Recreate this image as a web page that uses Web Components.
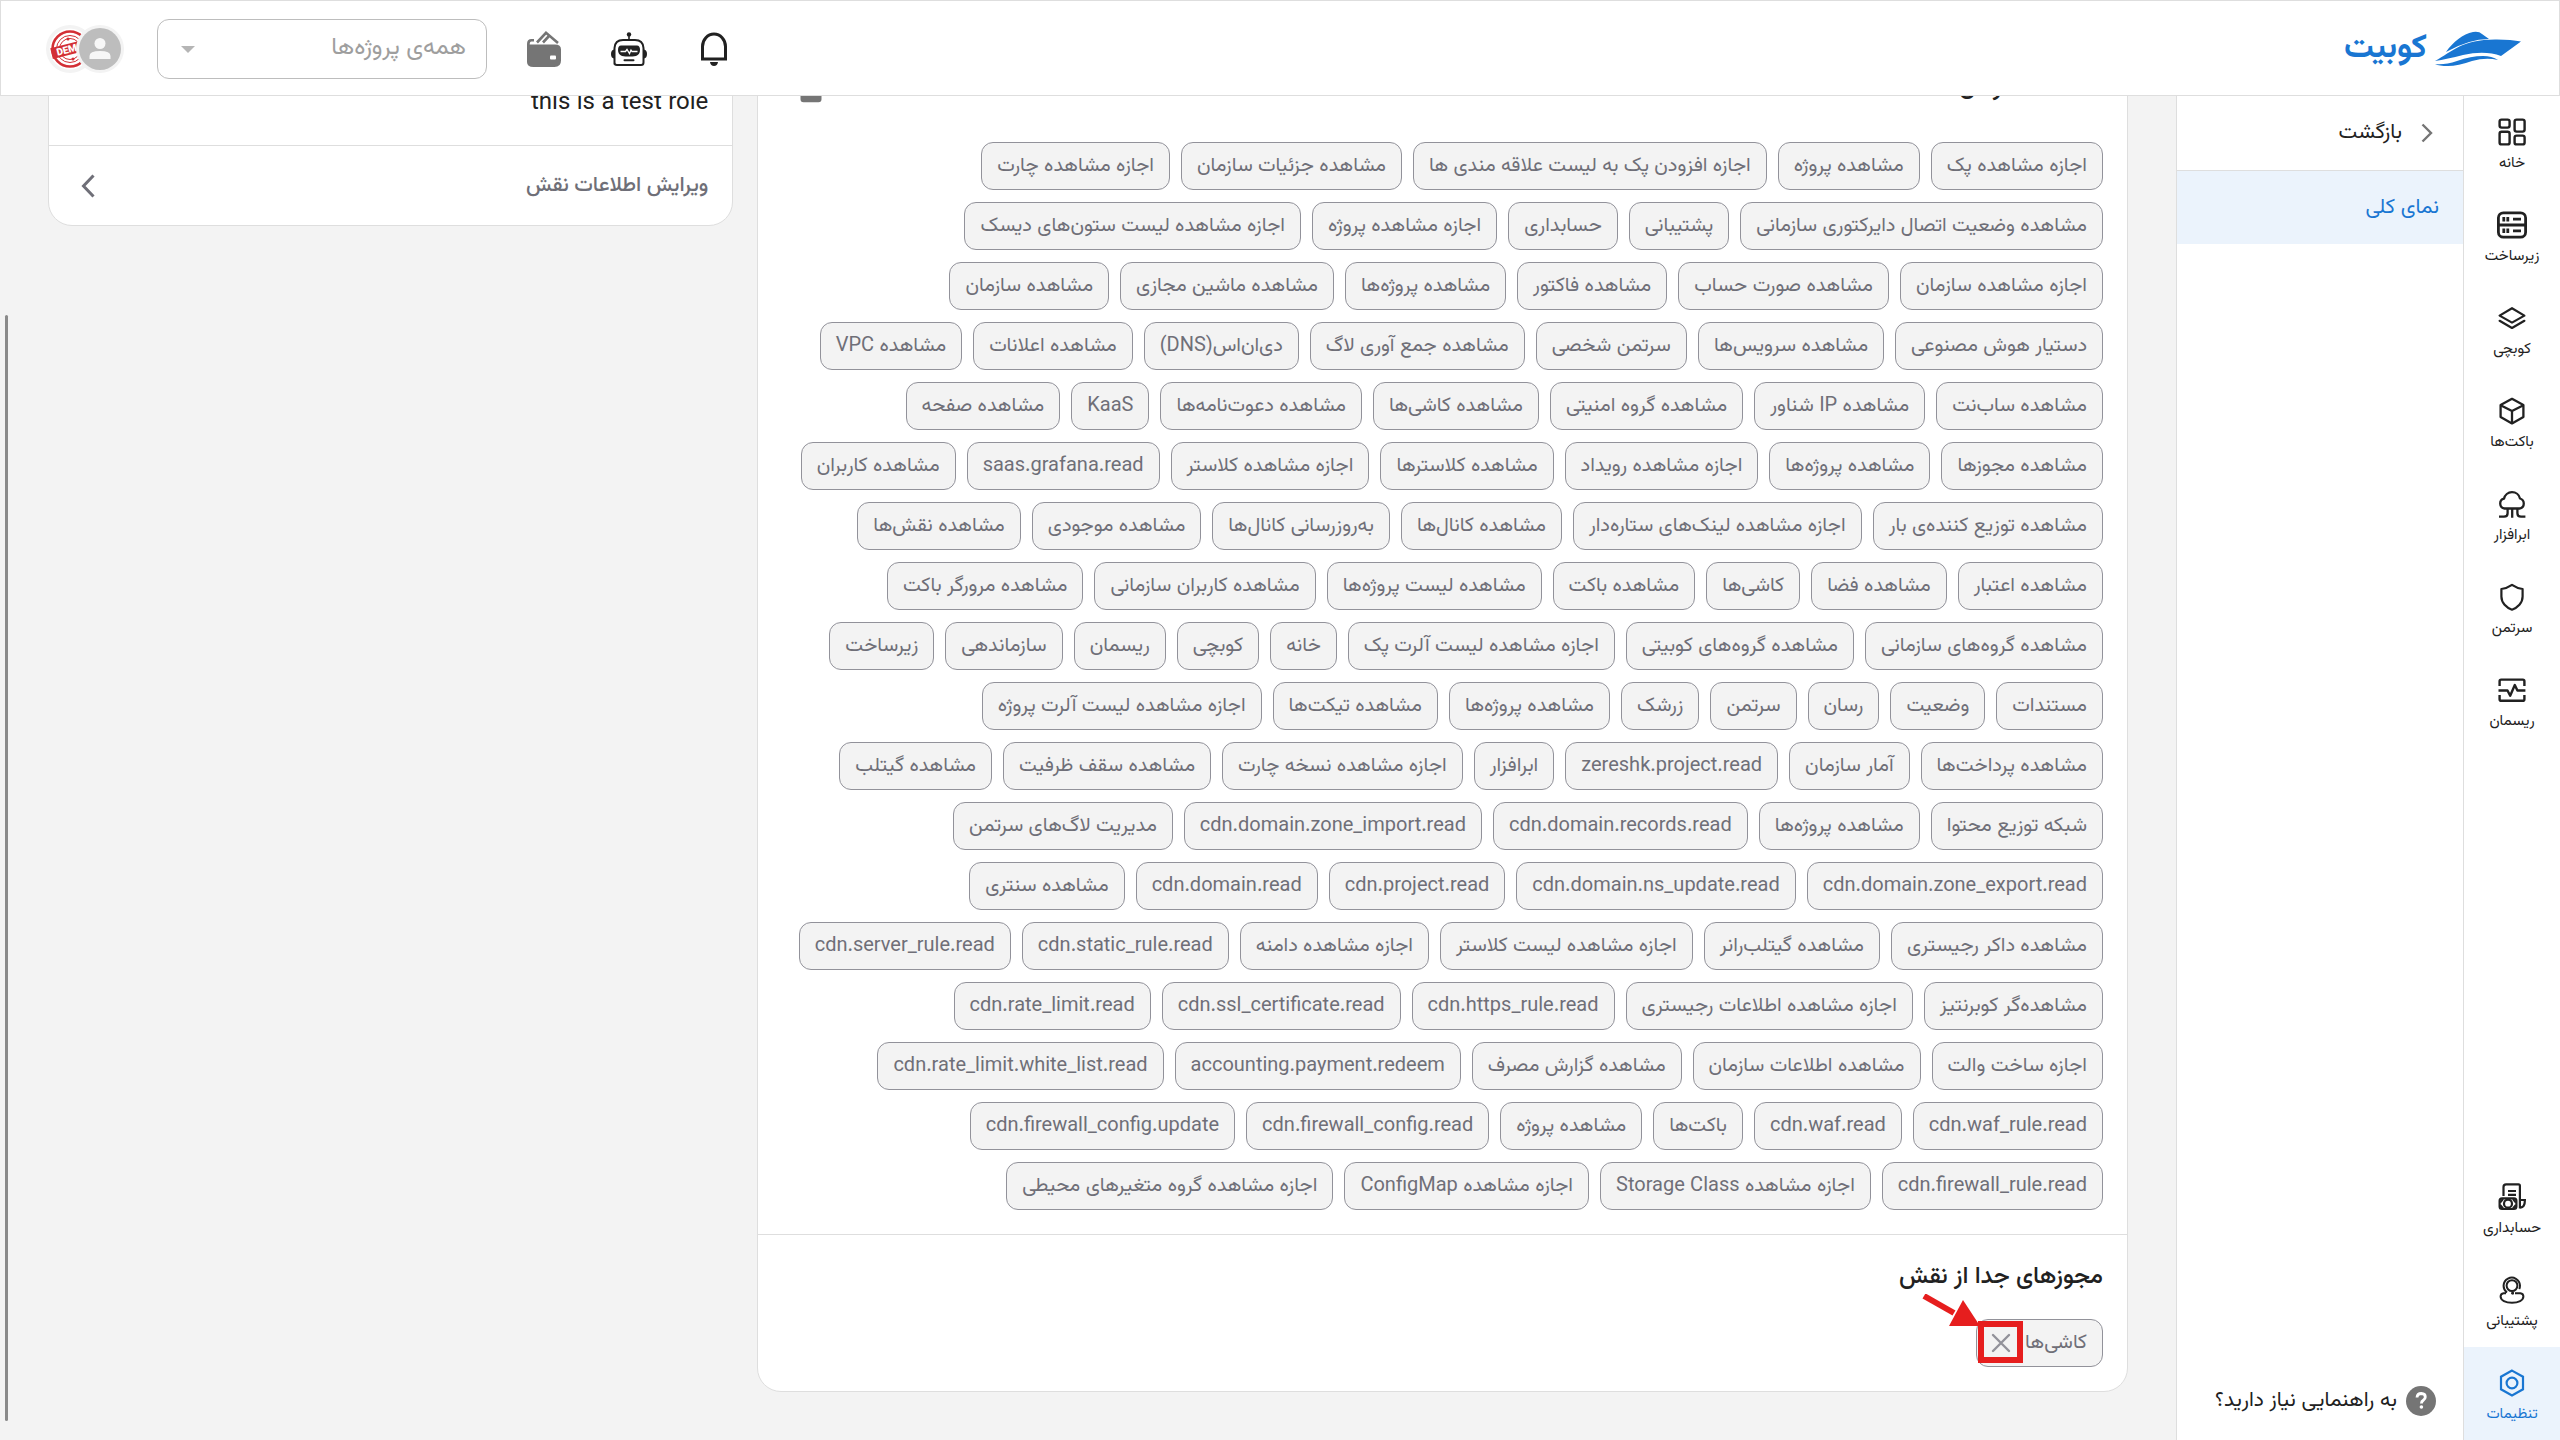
<!DOCTYPE html>
<html lang="fa" dir="rtl">
<head>
<meta charset="UTF-8">
<meta name="viewport" content="width=device-width, initial-scale=1.0">
<title>کوبیت</title>
<style>
    html, body {
        margin: 0;
        height: 100%;
    }
    body {
        --blue: #1976d2;
        --blue-soft: #ebf3fc;
        --line: #dedede;
        --ink: #212121;
        --muted: #6f6f78;
        --page: #f3f3f3;
        font-family: Vazirmatn, Roboto, "Noto Sans", sans-serif;
        color: var(--ink);
        background: var(--page);
    }
</style>
</head>
<body>
<kubit-app></kubit-app>

<script>
// Iconos compartidos por el encabezado y la barra lateral
const ICONS = {
    home: `<svg viewBox="0 0 28 28" fill="none" stroke="currentColor" stroke-width="2.4"><rect x="1.6" y="1.6" width="10" height="8" rx="2"/><rect x="16.6" y="1.6" width="10" height="12" rx="2"/><rect x="1.6" y="13.8" width="10" height="12.6" rx="2"/><rect x="16.6" y="17.6" width="10" height="8.8" rx="2"/></svg>`,
    infra: `<svg viewBox="0 0 30 28" fill="none" stroke="currentColor" stroke-width="2.8"><rect x="1.4" y="1.8" width="27.2" height="24.4" rx="5"/><path d="M1 14h28M6.8 6v4.4M10.8 6v4.4M16 8.2h8M6.8 17.6V22M10.8 17.6V22M16 19.8h8"/></svg>`,
    layers: `<svg viewBox="0 0 28 28" fill="none" stroke="currentColor" stroke-width="2.2" stroke-linejoin="round" stroke-linecap="round"><path d="M14 4.2 26.4 11.6 14 18.6 1.6 11.6z"/><path d="M1.6 16.8 14 24l12.4-7.2"/></svg>`,
    cube: `<svg viewBox="0 0 28 28" fill="none" stroke="currentColor" stroke-width="2.3" stroke-linejoin="round"><path d="M14 1.8 25.4 8v12L14 26.4 2.6 20V8z"/><path d="M2.6 8.2 14 14l11.4-5.8M14 14v12.4"/></svg>`,
    cloud: `<svg viewBox="0 0 28 28" fill="none" stroke="currentColor" stroke-width="2.3" stroke-linejoin="round"><path d="M6.5 18.5a5 5 0 0 1-.5-9.8 8.2 8.2 0 0 1 16-.2 5.2 5.2 0 0 1 0 10z"/><path d="M1 26.6h5q3.6 0 3.6-3.4v-4.5M14.2 18.7v9M27.4 26.6h-4.4q-3.6 0-3.6-3.4v-4.5"/></svg>`,
    shield: `<svg viewBox="0 0 28 28" fill="none" stroke="currentColor" stroke-width="2.2" stroke-linejoin="round"><path d="M14 1.8q5.4 3.6 10.6 4.2v7.5c0 6.5-5 11.3-10.6 13.2-5.6-1.9-10.6-6.7-10.6-13.2V6Q8.6 5.4 14 1.8z"/></svg>`,
    pulse: `<svg viewBox="0 0 28 28" fill="none" stroke="currentColor" stroke-width="2.4" stroke-linejoin="round"><path d="M1.6 10V5.2q0-1.6 1.6-1.6h21.6q1.6 0 1.6 1.6V10M1.6 19v4.2q0 1.6 1.6 1.6h21.6q1.6 0 1.6-1.6V19"/><path d="M.5 14.5h9l2.7 5.2L16.8 9l2.6 5.5h8"/></svg>`,
    billing: `<svg viewBox="0 0 28 28" fill="none" stroke="currentColor" stroke-width="2.2"><path d="M5.5 13V4q0-2.6 2.6-2.6h12.4q1.4 0 1.4 1.4V24.5q5 .5 5-7.5h-5M10 8h8M10 11.8h8"/><rect x="1.6" y="15.4" width="16.8" height="10.6" rx="2.4"/><circle cx="10" cy="20.7" r="4"/><path d="M2 19.5 5 16M2 22l3 3.5M18 19.5 15 16M18 22l-3 3.5"/></svg>`,
    support: `<svg viewBox="0 0 28 28" fill="none" stroke="currentColor" stroke-width="2"><circle cx="14" cy="9.6" r="5.4"/><path d="M9 16.5a8.2 8.2 0 1 1 13-6.9q0 2-.8 3.4M8 17.2H5.6q-3 .4-3 3.4c0 3.8 5 6.2 11.4 6.2s11.4-2.4 11.4-6.2q0-3-3-3.4H17M14 17.2h2"/><circle cx="14.5" cy="17.2" r="1.4" fill="currentColor" stroke="none"/></svg>`,
    settings: `<svg viewBox="0 0 28 28" fill="none" stroke="currentColor" stroke-width="2.2"><path d="M14 1.6 25 7.7v12.6L14 26.4 3 20.3V7.7z"/><circle cx="14" cy="14" r="5.4"/></svg>`,
    bell: `<svg viewBox="0 0 36 36"><path d="M6.5 28V15.500a11.5 12.5 0 0 1 23 0V28z" fill="none" stroke="#212121" stroke-width="3"/><path d="M14 31h8q-.6 4-4 4t-4-4z" fill="#212121"/></svg>`,
    robot: `<svg viewBox="0 0 36 36"><path d="M18 3v6" stroke="#212121" stroke-width="1.6"/><circle cx="18" cy="3.4" r="2.2" fill="#212121"/><path d="M3.5 33.5V17Q4 9 12 9h12q8 0 8.500 8v14.5q0 2.5-2.5 2.5H6q-2.5 0-2.5-2.5z" fill="#fff" stroke="#212121" stroke-width="2"/><path d="M3 18.5q-3 .5-3 4.500t3 4.500zM33 18.5q3 .5 3 4.500t-3 4.500z" fill="#212121"/><path d="M10 14.5h16q3 0 3 4.500t-4 6Q18 26 11 25q-4-1.5-4-6t3-4.500z" fill="#212121"/><path d="M9.5 20.5h5l1.5-2 2.5 4 1.5-3.5 1 1.5h5.5" fill="none" stroke="#fff" stroke-width="1.3"/><path d="M13.5 29.3h9" stroke="#212121" stroke-width="2" stroke-linecap="round"/></svg>`,
    wallet: `<svg viewBox="0 0 36 36"><path d="M1 31V13q0-5 4.500-5H8v2.500H5.500Q3.700 10.500 3.700 13.500H29q6 0 6 5v11q0 6.500-6.500 6.500h-21Q1 36 1 31z" fill="#757575"/><rect x="24" y="24.5" width="6" height="4" rx="1" fill="#fff"/><path d="M11 11.500 20 1.800 32 12M17 11.500l6-6.500" fill="none" stroke="#757575" stroke-width="2.6"/></svg>`,
    trash: `<svg viewBox="0 0 24 24"><path d="M5 7h14v12.5q0 2-2 2H7q-2 0-2-2zM4 3h4l1-1h6l1 1h4v2H4z" fill="#757575"/></svg>`
};

// Permisos del rol, en el orden en que se muestran
const PERMISSIONS = [
    'اجازه مشاهده پک', 'مشاهده پروژه', 'اجازه افزودن پک به لیست علاقه مندی ها', 'مشاهده جزئیات سازمان', 'اجازه مشاهده چارت',
    'مشاهده وضعیت اتصال دایرکتوری سازمانی', 'پشتیبانی', 'حسابداری', 'اجازه مشاهده پروژه', 'اجازه مشاهده لیست ستون‌های دیسک',
    'اجازه مشاهده سازمان', 'مشاهده صورت حساب', 'مشاهده فاکتور', 'مشاهده پروژه‌ها', 'مشاهده ماشین مجازی', 'مشاهده سازمان',
    'دستیار هوش مصنوعی', 'مشاهده سرویس‌ها', 'سرتمن شخصی', 'مشاهده جمع آوری لاگ', 'دی‌ان‌اس(DNS)', 'مشاهده اعلانات', 'مشاهده VPC',
    'مشاهده ساب‌نت', 'مشاهده IP شناور', 'مشاهده گروه امنیتی', 'مشاهده کاشی‌ها', 'مشاهده دعوت‌نامه‌ها', 'KaaS', 'مشاهده صفحه',
    'مشاهده مجوزها', 'مشاهده پروژه‌ها', 'اجازه مشاهده رویداد', 'مشاهده کلاسترها', 'اجازه مشاهده کلاستر', 'saas.grafana.read', 'مشاهده کاربران',
    'مشاهده توزیع کننده‌ی بار', 'اجازه مشاهده لینک‌های ستاره‌دار', 'مشاهده کانال‌ها', 'به‌روزرسانی کانال‌ها', 'مشاهده موجودی', 'مشاهده نقش‌ها',
    'مشاهده اعتبار', 'مشاهده فضا', 'کاشی‌ها', 'مشاهده باکت', 'مشاهده لیست پروژه‌ها', 'مشاهده کاربران سازمانی', 'مشاهده مرورگر باکت',
    'مشاهده گروه‌های سازمانی', 'مشاهده گروه‌های کوبیتی', 'اجازه مشاهده لیست آلرت پک', 'خانه', 'کوبچی', 'ریسمان', 'سازماندهی', 'زیرساخت',
    'مستندات', 'وضعیت', 'رسان', 'سرتمن', 'زرشک', 'مشاهده پروژه‌ها', 'مشاهده تیکت‌ها', 'اجازه مشاهده لیست آلرت پروژه',
    'مشاهده پرداخت‌ها', 'آمار سازمان', 'zereshk.project.read', 'ابرافزار', 'اجازه مشاهده نسخه چارت', 'مشاهده سقف ظرفیت', 'مشاهده گیتلب',
    'شبکه توزیع محتوا', 'مشاهده پروژه‌ها', 'cdn.domain.records.read', 'cdn.domain.zone_import.read', 'مدیریت لاگ‌های سرتمن',
    'cdn.domain.zone_export.read', 'cdn.domain.ns_update.read', 'cdn.project.read', 'cdn.domain.read', 'مشاهده سنتری',
    'مشاهده داکر رجیستری', 'مشاهده گیتلب‌رانر', 'اجازه مشاهده لیست کلاستر', 'اجازه مشاهده دامنه', 'cdn.static_rule.read', 'cdn.server_rule.read',
    'مشاهده‌گر کوبرنتیز', 'اجازه مشاهده اطلاعات رجیستری', 'cdn.https_rule.read', 'cdn.ssl_certificate.read', 'cdn.rate_limit.read',
    'اجازه ساخت والت', 'مشاهده اطلاعات سازمان', 'مشاهده گزارش مصرف', 'accounting.payment.redeem', 'cdn.rate_limit.white_list.read',
    'cdn.waf_rule.read', 'cdn.waf.read', 'باکت‌ها', 'مشاهده پروژه', 'cdn.firewall_config.read', 'cdn.firewall_config.update',
    'cdn.firewall_rule.read', 'اجازه مشاهده Storage Class', 'اجازه مشاهده ConfigMap', 'اجازه مشاهده گروه متغیرهای محیطی'
];

class KubitLogo extends HTMLElement {
    constructor() {
        super();
        this.attachShadow({ mode: 'open' }).innerHTML = `
            <style>
                :host { display: block; }
                a { display: flex; align-items: center; gap: 8px; color: var(--blue); text-decoration: none; font-size: 33px; font-weight: 700; line-height: 48px; }
                svg { width: 86px; height: 36px; }
            </style>
            <a href="#">
                <svg viewBox="0 0 86 36" fill="currentColor" aria-hidden="true">
                    <path d="M11 21C18 11 28 3 38 1q6-1 9 2l7 5Q34 8 11 21z"/>
                    <path d="M0 30C18 20 28 8 62 8.5q14 0 24 2L66 25Q50 19 28 24 12 28 0 30z"/>
                    <path d="M0 33q10 1 22-3 14-5 26-5 9 0 15 4-12-3-26 1-14 5-24 5-9 0-13-2z"/>
                </svg>
                <span>کوبیت</span>
            </a>
        `;
    }
}
customElements.define('kubit-logo', KubitLogo);

class UserAvatars extends HTMLElement {
    constructor() {
        super();
        this.attachShadow({ mode: 'open' }).innerHTML = `
            <style>
                :host { display: block; padding: 0 5px 0 45px; }
                button { display: flex; padding: 0; border: 0; background: none; }
                svg { width: 48px; height: 48px; }
                svg + svg { margin-right: -18px; }
                svg:first-child { position: relative; z-index: 1; }
            </style>
            <button type="button" aria-label="حساب کاربری">
                <svg viewBox="0 0 48 48">
                    <circle cx="24" cy="24" r="24" fill="#f3f3f3"/>
                    <circle cx="24" cy="24" r="21" fill="#bdbdbd"/>
                    <circle cx="24" cy="18.5" r="5.5" fill="#f7f7f7"/>
                    <path d="M13.5 34v-3q0-5 10.5-5t10.5 5v3z" fill="#f7f7f7"/>
                </svg>
                <svg viewBox="0 0 48 48">
                    <circle cx="24" cy="24" r="24" fill="#f3f3f3"/>
                    <circle cx="24" cy="24" r="20.5" fill="#fff"/>
                    <g fill="none" stroke="#d32f35">
                        <circle cx="24" cy="24" r="17.5" stroke-width="2.6"/>
                        <circle cx="24" cy="24" r="13.5" stroke-width="1"/>
                        <circle cx="24" cy="24" r="10.5" stroke-width="1"/>
                    </g>
                    <circle cx="22" cy="14" r="1.5" fill="#d32f35"/>
                    <circle cx="27" cy="34" r="1.5" fill="#d32f35"/>
                    <g transform="rotate(-14 24 24)">
                        <rect x="5" y="18.5" width="38" height="11" fill="#d32f35"/>
                        <text x="24" y="27.5" text-anchor="middle" direction="ltr" font-family="Roboto, sans-serif" font-size="10" font-weight="900" fill="#fff">DEMO</text>
                    </g>
                </svg>
            </button>
        `;
    }
}
customElements.define('user-avatars', UserAvatars);

class ProjectSelect extends HTMLElement {
    constructor() {
        super();
        this.attachShadow({ mode: 'open' }).innerHTML = `
            <style>
                :host { display: block; position: relative; width: 330px; }
                select {
                    appearance: none; box-sizing: border-box; width: 100%; height: 60px; padding: 0 20px 2px 48px;
                    border: 1px solid #bdbdbd; border-radius: 12px; background: #fff; color: #9e9e9e;
                    font-family: inherit; font-size: 24px; line-height: 36px;
                }
                i {
                    position: absolute; left: 24px; top: 27px; pointer-events: none;
                    border: 7px solid transparent; border-top-color: #b5b5b5; border-bottom: 0;
                }
            </style>
            <select aria-label="پروژه"><option>همه‌ی پروژه‌ها</option></select>
            <i></i>
        `;
    }
}
customElements.define('project-select', ProjectSelect);

class IconButton extends HTMLElement {
    constructor() {
        super();
        this.attachShadow({ mode: 'open' }).innerHTML = `
            <style>
                :host { display: block; }
                button { display: grid; place-items: center; width: 57px; height: 60px; padding: 0; border: 0; background: none; }
                svg { width: 36px; height: 36px; }
            </style>
            <button type="button" aria-label="${this.getAttribute('label')}">${ICONS[this.getAttribute('icon')]}</button>
        `;
    }
}
customElements.define('icon-button', IconButton);

class AppHeader extends HTMLElement {
    constructor() {
        super();
        this.attachShadow({ mode: 'open' }).innerHTML = `
            <style>
                :host {
                    display: flex; align-items: center; justify-content: space-between; box-sizing: border-box;
                    height: 96px; padding: 2px 38px 0 0; background: #fff; border: 1px solid var(--line);
                }
                div { display: flex; align-items: center; gap: 28px; }
            </style>
            <kubit-logo></kubit-logo>
            <div>
                <icon-button icon="bell" label="اعلان‌ها"></icon-button>
                <icon-button icon="robot" label="دستیار"></icon-button>
                <icon-button icon="wallet" label="کیف پول"></icon-button>
                <project-select></project-select>
                <user-avatars></user-avatars>
            </div>
        `;
    }
}
customElements.define('app-header', AppHeader);

class RailItem extends HTMLElement {
    constructor() {
        super();
        this.attachShadow({ mode: 'open' }).innerHTML = `
            <style>
                :host { display: block; }
                a {
                    display: flex; flex-direction: column; align-items: center; gap: 6px; box-sizing: border-box;
                    height: 93px; padding-top: 22px; color: inherit; text-decoration: none; font-size: 15px; line-height: 24px;
                }
                svg { width: 28px; height: 28px; }
                :host([icon=infra]) svg { width: 30px; }
                :host([active]) a { color: var(--blue); background: var(--blue-soft); }
            </style>
            <a href="#">${ICONS[this.getAttribute('icon')]}<slot></slot></a>
        `;
    }
}
customElements.define('rail-item', RailItem);

class NavRail extends HTMLElement {
    constructor() {
        super();
        this.attachShadow({ mode: 'open' }).innerHTML = `
            <style>
                :host { display: block; }
                nav {
                    display: flex; flex-direction: column; justify-content: space-between; box-sizing: border-box;
                    width: 97px; height: 100%; background: #fff; border-left: 1px solid var(--line);
                }
            </style>
            <nav>
                <div>
                    <rail-item icon="home">خانه</rail-item>
                    <rail-item icon="infra">زیرساخت</rail-item>
                    <rail-item icon="layers">کوبچی</rail-item>
                    <rail-item icon="cube">باکت‌ها</rail-item>
                    <rail-item icon="cloud">ابرافزار</rail-item>
                    <rail-item icon="shield">سرتمن</rail-item>
                    <rail-item icon="pulse">ریسمان</rail-item>
                </div>
                <div>
                    <rail-item icon="billing">حسابداری</rail-item>
                    <rail-item icon="support">پشتیبانی</rail-item>
                    <rail-item icon="settings" active>تنظیمات</rail-item>
                </div>
            </nav>
        `;
    }
}
customElements.define('nav-rail', NavRail);

class SettingsMenu extends HTMLElement {
    constructor() {
        super();
        this.attachShadow({ mode: 'open' }).innerHTML = `
            <style>
                :host { display: block; }
                nav {
                    display: flex; flex-direction: column; box-sizing: border-box;
                    width: 287px; height: 100%; background: #fff; border-left: 1px solid var(--line);
                }
                a { display: flex; align-items: center; box-sizing: border-box; color: inherit; text-decoration: none; font-size: 21px; line-height: 36px; }
                .back { height: 75px; gap: 19px; padding-right: 30px; border-bottom: 1px solid var(--line); }
                .back svg { width: 12px; height: 20px; }
                .item { height: 73px; padding-right: 24px; color: var(--blue); background: var(--blue-soft); }
                .help { height: 78px; gap: 9px; margin-top: auto; padding-right: 27px; }
                .help svg { width: 30px; height: 30px; }
            </style>
            <nav>
                <a class="back" href="#">
                    <svg viewBox="0 0 12 20" fill="none" stroke="#757575" stroke-width="2.4"><path d="M1.5 1.5 10 10l-8.5 8.5"/></svg>
                    بازگشت
                </a>
                <a class="item" href="#">نمای کلی</a>
                <a class="help" href="#">
                    <svg viewBox="0 0 30 30"><circle cx="15" cy="15" r="15" fill="#757575"/><path d="M11 11.5q.3-4 4.3-4 4 .2 4 3.5 0 2-2 3.2-1.9 1.1-1.9 3.3" fill="none" stroke="#fff" stroke-width="2.8"/><circle cx="15.4" cy="21" r="1.8" fill="#fff"/></svg>
                    به راهنمایی نیاز دارید؟
                </a>
            </nav>
        `;
    }
}
customElements.define('settings-menu', SettingsMenu);

class PermissionChip extends HTMLElement {
    constructor() {
        super();
        this.attachShadow({ mode: 'open' }).innerHTML = `
            <style>
                :host {
                    display: flex; align-items: center; box-sizing: border-box; height: 48px; padding: 0 15px;
                    border: 1px solid #92929a; border-radius: 12px; background: var(--page); color: var(--muted);
                    font-size: 20px; line-height: 30px; white-space: nowrap;
                }
                :host([removable]) { gap: 8px; padding: 0 15px 0 8px; }
                slot[name=remove] { display: contents; }
            </style>
            <slot></slot><slot name="remove"></slot>
        `;
    }
}
customElements.define('permission-chip', PermissionChip);

class RemoveButton extends HTMLElement {
    constructor() {
        super();
        this.attachShadow({ mode: 'open' }).innerHTML = `
            <style>
                :host { display: block; position: relative; }
                button { display: grid; place-items: center; width: 32px; height: 32px; padding: 0; border: 0; background: none; }
                .cross { width: 20px; height: 20px; }
                .mark { position: absolute; left: -63px; top: -33px; width: 102px; height: 71px; pointer-events: none; }
            </style>
            <button type="button" aria-label="حذف مجوز">
                <svg class="cross" viewBox="0 0 20 20" stroke="#92929a" stroke-width="2.4" stroke-linecap="round"><path d="M2 2l16 16M18 2 2 18"/></svg>
            </button>
            <svg class="mark" viewBox="0 0 102 71">
                <rect x="59" y="30" width="39" height="36" fill="none" stroke="#e61e1e" stroke-width="6"/>
                <path d="M2 2 32 19" stroke="#e61e1e" stroke-width="6" fill="none"/>
                <path d="M41 6 58 32H27z" fill="#e61e1e"/>
            </svg>
        `;
    }
}
customElements.define('remove-button', RemoveButton);

class PermissionsCard extends HTMLElement {
    constructor() {
        super();
        this.attachShadow({ mode: 'open' }).innerHTML = `
            <style>
                :host { display: block; box-sizing: border-box; background: #fff; border: 1px solid var(--line); border-radius: 24px; }
                section { padding: 24px; }
                section + section { border-top: 1px solid var(--line); }
                header { display: flex; align-items: center; justify-content: space-between; height: 60px; margin-bottom: 24px; }
                h2 { margin: 0; font-size: 24px; font-weight: 500; line-height: 36px; }
                section + section h2 { margin-bottom: 24px; }
                .chips { display: flex; flex-wrap: wrap; gap: 12px 11px; padding-left: 8px; }
            </style>
            <section>
                <header>
                    <h2>خدمات سازمان</h2>
                    <icon-button icon="trash" label="حذف نقش"></icon-button>
                </header>
                <div class="chips">
                    ${PERMISSIONS.map(name => `<permission-chip>${name}</permission-chip>`).join('')}
                </div>
            </section>
            <section>
                <h2>مجوزهای جدا از نقش</h2>
                <div class="chips">
                    <permission-chip removable>کاشی‌ها<remove-button slot="remove"></remove-button></permission-chip>
                </div>
            </section>
        `;
    }
}
customElements.define('permissions-card', PermissionsCard);

class RoleCard extends HTMLElement {
    constructor() {
        super();
        this.attachShadow({ mode: 'open' }).innerHTML = `
            <style>
                :host { display: block; box-sizing: border-box; background: #fff; border: 1px solid var(--line); border-radius: 24px; }
                p { margin: 0; padding: 51px 24px 24px; font-size: 24px; line-height: 36px; }
                a {
                    display: flex; align-items: center; justify-content: space-between; height: 79px; padding: 0 24px 0 32px;
                    border-top: 1px solid var(--line); color: var(--muted); text-decoration: none; font-size: 21px; font-weight: 500; line-height: 36px;
                }
                svg { width: 14px; height: 24px; }
            </style>
            <p><slot></slot></p>
            <a href="#">
                ویرایش اطلاعات نقش
                <svg viewBox="0 0 14 24" fill="none" stroke="currentColor" stroke-width="3"><path d="M12.5 1.5 2.5 12l10 10.5"/></svg>
            </a>
        `;
    }
}
customElements.define('role-card', RoleCard);

class KubitApp extends HTMLElement {
    constructor() {
        super();
        this.attachShadow({ mode: 'open' }).innerHTML = `
            <style>
                :host { display: grid; grid-template-rows: auto 1fr; height: 100vh; overflow: hidden; }
                .body { display: grid; grid-template-columns: auto auto 1fr; min-height: 0; }
                main { position: relative; overflow: hidden; }
                /* el contenido queda desplazado bajo el encabezado */
                .content { display: grid; grid-template-columns: 2fr 1fr; align-items: start; gap: 24px; margin: -63px 48px 48px; }
                .scrollbar { position: absolute; left: 5px; top: 219px; bottom: 19px; width: 3px; border-radius: 2px; background: #8a8a8a; }
            </style>
            <app-header></app-header>
            <div class="body">
                <nav-rail></nav-rail>
                <settings-menu></settings-menu>
                <main>
                    <div class="content">
                        <permissions-card></permissions-card>
                        <role-card>this is a test role</role-card>
                    </div>
                    <div class="scrollbar"></div>
                </main>
            </div>
        `;
    }
}
customElements.define('kubit-app', KubitApp);
</script>
</body>
</html>
